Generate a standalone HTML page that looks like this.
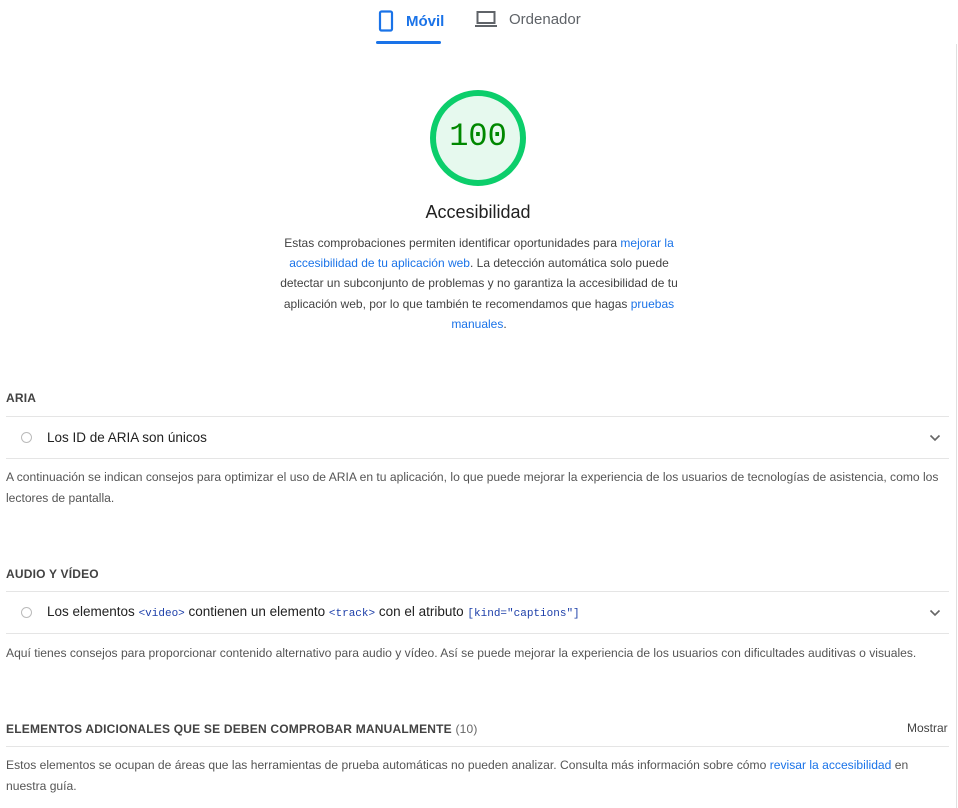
<!DOCTYPE html>
<html><head><meta charset="utf-8"><style>
*{margin:0;padding:0;box-sizing:border-box}
body{width:958px;height:808px;background:#fff;font-family:"Liberation Sans",sans-serif;color:#212121;position:relative;overflow:hidden}
.vline{position:absolute;left:956px;top:44px;width:1px;height:764px;background:#e0e0e0}
.tab{position:absolute;top:10px;font-size:15px;display:flex;align-items:center;gap:12px}
.abs{position:absolute}
.desc{position:absolute;left:272px;top:233px;width:414px;text-align:center;font-size:12px;line-height:20.2px;color:#424242}
a{color:#1a73e8;text-decoration:none}
.h{position:absolute;left:6px;font-size:12px;font-weight:bold;color:#424242;letter-spacing:.2px}
.line{position:absolute;left:6px;width:943px;height:1px;background:#e5e5e5}
.item{position:absolute;left:47px;font-size:13.5px;color:#212121}
.dot{position:absolute;left:21px;width:11px;height:11px;border:1.5px solid #bbb;border-radius:50%}
.p{position:absolute;left:6px;width:945px;font-size:12.1px;line-height:21px;color:#555}
code{font-family:"Liberation Mono",monospace;font-size:11px;color:#1d3fa9}
.chev{position:absolute;left:929px}
</style></head><body>
<div class="vline"></div>
<div class="tab" style="left:378px;color:#1a73e8;font-weight:bold">
<svg width="16" height="22" viewBox="0 0 16 22"><rect x="2" y="1.5" width="12" height="19" rx="1.5" fill="none" stroke="#1a73e8" stroke-width="2.2"/></svg>Móvil</div>
<div class="abs" style="left:376px;top:41px;width:65px;height:3px;background:#1a73e8;border-radius:2px"></div>
<div class="tab" style="left:475px;color:#5f6368">
<svg width="22" height="18" viewBox="0 0 22 18"><rect x="2.5" y="2" width="17" height="11" fill="none" stroke="#5f6368" stroke-width="2"/><rect x="0" y="15" width="22" height="2" fill="#5f6368"/></svg>Ordenador</div>
<div class="abs" style="left:430px;top:90px;width:96px;height:96px;border-radius:50%;border:6px solid #0cce6b;background:#e6f9ee"></div>
<div class="abs" style="left:430px;top:118px;width:96px;text-align:center;font-family:'Liberation Mono',monospace;font-size:32px;color:#008800">100</div>
<div class="abs" style="left:380px;top:202px;width:196px;text-align:center;font-size:18px;color:#212121">Accesibilidad</div>
<div class="desc">Estas comprobaciones permiten identificar oportunidades para <a>mejorar la accesibilidad de tu aplicación web</a>. La detección automática solo puede detectar un subconjunto de problemas y no garantiza la accesibilidad de tu aplicación web, por lo que también te recomendamos que hagas <a>pruebas manuales</a>.</div>

<div class="h" style="top:391px">ARIA</div>
<div class="line" style="top:416px"></div>
<div class="dot" style="top:432px"></div>
<div class="item" style="top:430px">Los ID de ARIA son únicos</div>
<svg class="chev" style="top:434px" width="12" height="8" viewBox="0 0 12 8"><path d="M1.5 1.5L6 6l4.5-4.5" fill="none" stroke="#666" stroke-width="1.6"/></svg>
<div class="line" style="top:458px"></div>
<div class="p" style="top:467px">A continuación se indican consejos para optimizar el uso de ARIA en tu aplicación, lo que puede mejorar la experiencia de los usuarios de tecnologías de asistencia, como los lectores de pantalla.</div>

<div class="h" style="top:567px">AUDIO Y VÍDEO</div>
<div class="line" style="top:591px"></div>
<div class="dot" style="top:607px"></div>
<div class="item" style="top:604px">Los elementos <code>&lt;video&gt;</code> contienen un elemento <code>&lt;track&gt;</code> con el atributo <code>[kind="captions"]</code></div>
<svg class="chev" style="top:609px" width="12" height="8" viewBox="0 0 12 8"><path d="M1.5 1.5L6 6l4.5-4.5" fill="none" stroke="#666" stroke-width="1.6"/></svg>
<div class="line" style="top:633px"></div>
<div class="p" style="top:643px">Aquí tienes consejos para proporcionar contenido alternativo para audio y vídeo. Así se puede mejorar la experiencia de los usuarios con dificultades auditivas o visuales.</div>

<div class="h" style="top:722px">ELEMENTOS ADICIONALES QUE SE DEBEN COMPROBAR MANUALMENTE <span style="font-weight:normal;color:#666">(10)</span></div>
<div class="abs" style="left:907px;top:721px;font-size:12px;color:#424242">Mostrar</div>
<div class="line" style="top:746px"></div>
<div class="p" style="top:755px">Estos elementos se ocupan de áreas que las herramientas de prueba automáticas no pueden analizar. Consulta más información sobre cómo <a>revisar la accesibilidad</a> en nuestra guía.</div>
</body></html>
